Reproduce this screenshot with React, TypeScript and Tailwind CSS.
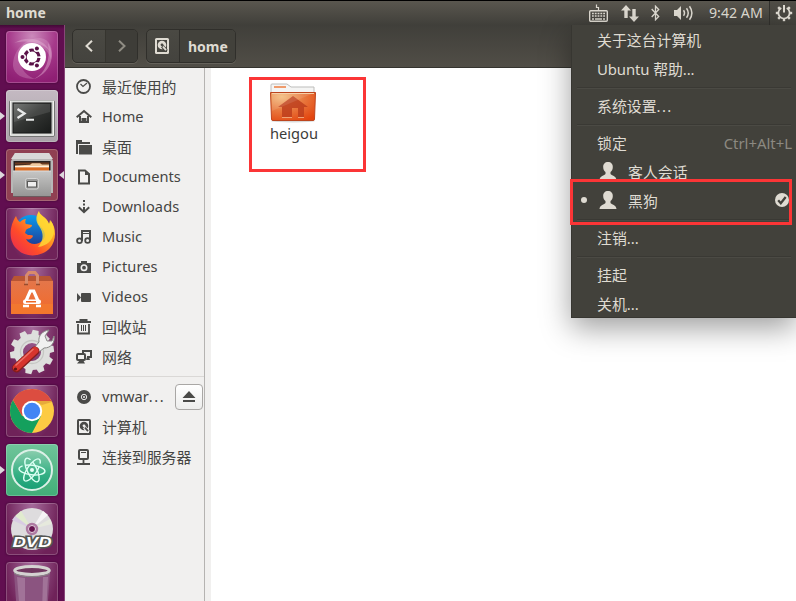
import type { ReactNode } from "react";

const FONT = "font-['Noto_Sans','Noto_Sans_CJK_SC',sans-serif]";

function Svg({ size = 16, children, className = "" }: { size?: number; children: ReactNode; className?: string }) {
  return (
    <svg width={size} height={size} viewBox={`0 0 ${size} ${size}`} className={`shrink-0 ${className}`} fill="none">
      {children}
    </svg>
  );
}

const G = "#4a4a48";

function DiskGlyph({ c, bg }: { c: string; bg: string }) {
  return (
    <>
      <rect x="1" y="0" width="14" height="16" rx="1.5" fill={c} />
      <rect x="3" y="2" width="10" height="12" fill={bg} />
      <circle cx="8" cy="7" r="4.3" fill={c} />
      <circle cx="8" cy="6.8" r="1.4" fill={bg} />
      <path d="M8.3 8.2l4.2 5" stroke={bg} strokeWidth="3.4" />
      <path d="M9 8.6l3 3.6" stroke={c} strokeWidth="1.8" />
    </>
  );
}

/* ---------- Launcher artwork, 52x52 ---------- */

const Dash = () => (
  <>
    <defs>
      <radialGradient id="dash" cx=".5" cy=".1" r=".9">
        <stop offset="0" stopColor="#cb8abb" />
        <stop offset=".5" stopColor="#a63a8b" />
        <stop offset="1" stopColor="#8f1f74" />
      </radialGradient>
    </defs>
    <rect width="52" height="52" rx="3" fill="url(#dash)" />
    <path d="M7 35C7 18 20 7 34 7c10 1 14 11 11 22-3-13-16-19-25-12-6 5-8 13-4 20 3 6 8 9 13 11C17 48 8 44 7 35z" fill="#e5b5d6" opacity=".28" />
    <path d="M42 12c9 14 1 31-14 36 11-6 17-18 14-36z" fill="#edc4df" opacity=".4" />
    <path d="M8 12C20 5 36 6 44 20 34 10 20 9 8 12z" fill="#edc4df" opacity=".35" />
    <circle cx="26" cy="26" r="14" fill="#fff" />
    <circle cx="26" cy="26" r="7" stroke="#5a1148" strokeWidth="3.2" strokeDasharray="12.9 1.76" strokeDashoffset="-.9" />
    <circle cx="17" cy="26" r="3" fill="#fff" />
    <circle cx="30.7" cy="18" r="3" fill="#fff" />
    <circle cx="30.7" cy="34" r="3" fill="#fff" />
    <circle cx="16.5" cy="26" r="2" fill="#5a1148" />
    <circle cx="30.9" cy="17.5" r="2" fill="#5a1148" />
    <circle cx="30.9" cy="34.5" r="2" fill="#5a1148" />
  </>
);

const Terminal = () => (
  <>
    <defs>
      <linearGradient id="term" x2="1" y2="1">
        <stop offset="0" stopColor="#686b68" />
        <stop offset=".45" stopColor="#343634" />
        <stop offset="1" stopColor="#191b1a" />
      </linearGradient>
      <linearGradient id="termTile" x2="0" y2="1">
        <stop offset="0" stopColor="#c4b9c2" />
        <stop offset="1" stopColor="#aaa3a9" />
      </linearGradient>
    </defs>
    <rect width="52" height="52" rx="3" fill="url(#termTile)" />
    <rect x="3.5" y="10.5" width="45" height="36" rx="1.5" fill="#c9cbc8" stroke="#757574" />
    <rect x="4.5" y="11" width="43" height="34" fill="none" stroke="#f2f2ef" />
    <rect x="7" y="13" width="38" height="30" fill="url(#term)" stroke="#191919" />
    <path d="M8 14h36v8L8 32z" fill="#fff" opacity=".1" />
    <path d="M11.5 19l7 4.5-7 4.5" stroke="#e9eaea" strokeWidth="2.3" />
    <path d="M20 29.8h8" stroke="#e9eaea" strokeWidth="2" />
  </>
);

const Files = () => (
  <>
    <defs>
      <linearGradient id="cab" x2="0" y2="1">
        <stop offset="0" stopColor="#c6c6c5" />
        <stop offset="1" stopColor="#969695" />
      </linearGradient>
    </defs>
    <rect width="52" height="52" rx="3" fill="#904052" />
    <path d="M9 4h34l4 8v32H5V12z" fill="#b8b8b7" />
    <path d="M9 4h34l4 6H5z" fill="#d9d9d8" />
    <path d="M7.5 12h37v11h-37z" fill="#292321" />
    <path d="M9 13.5h34v2H9z" fill="#6d3b1f" />
    <path d="M9 16.5l15-.8 2-1.4h8l2 1.2h7v7H9z" fill="#f0cba2" />
    <path d="M9 18.5h34v3.500H9z" fill="#d96c24" />
    <path d="M9 17.5h34" stroke="#fff2de" strokeWidth="1" />
    <path d="M7 22h38v25H7z" fill="url(#cab)" />
    <path d="M7 22h38" stroke="#dededd" />
    <path d="M7 47.500h38" stroke="#6b5b5e" />
    <rect x="19.5" y="29.5" width="13" height="10.5" rx="2" fill="#9b9b9a" stroke="#d5d5d4" />
    <rect x="21.5" y="32.5" width="9" height="5.5" fill="#eee" stroke="#595957" />
  </>
);

const Firefox = () => (
  <>
    <defs>
      <linearGradient id="ff" x1="1" x2="0" y1="0" y2="1">
        <stop offset="0" stopColor="#ffe638" />
        <stop offset=".35" stopColor="#ffa021" />
        <stop offset=".65" stopColor="#ff4c29" />
        <stop offset="1" stopColor="#e52458" />
      </linearGradient>
      <linearGradient id="globe" x2="0" y2="1">
        <stop offset="0" stopColor="#0a9cee" />
        <stop offset="1" stopColor="#20318d" />
      </linearGradient>
    </defs>
    <circle cx="25" cy="24" r="17" fill="url(#globe)" />
    <path d="M10 8c1 3 2 5 4 6 2-2 4-3 6-3-1 2-1 4 0 5l6 1c0 3-4 3-6 5l-1 3 3 2c3 0 5 0 5 1-1 3-4 4-7 3 3 6 12 7 17 1 4-5 1-10-3-14-4-5-3-11-1-15 0 4 8 6 10 13l2-3c6 8 5 20-1 27-8 9-24 10-32 2C1 33 4 17 10 8z" fill="url(#ff)" />
    <path d="M33 3c-4 6-3 11 0 15 5 7 5 14-1 21 9-1 15-7 16-15 0-6-2-10-4-12l-1 4C41 9 33 8 33 3z" fill="#ffdd36" opacity=".8" />
  </>
);

const Software = () => (
  <>
    <defs>
      <linearGradient id="bag" x2="0" y2="1">
        <stop offset="0" stopColor="#e4764a" />
        <stop offset="1" stopColor="#f36a29" />
      </linearGradient>
    </defs>
    <path d="M8 9h36l3 5v33H5V14z" fill="#b85533" />
    <path d="M5 14h42v33H5z" fill="url(#bag)" />
    <path d="M5 37h42v10H5z" fill="#f37e2e" opacity=".6" />
    <path d="M20.500 18V8.500l2.500-3h6l2.500 3V18" stroke="#d98b6b" strokeWidth="3" />
    <path d="M18 17.500h4M30 17.500h4" stroke="#994b2c" strokeWidth="1.5" />
    <path d="M19.500 35l4.800-11h3.400l4.800 11" stroke="#fff" strokeWidth="3.2" />
    <rect x="17" y="32.5" width="18" height="4.500" rx="2" fill="#fff" />
    <path d="M20 34h10v1.500H20z" fill="#ed6826" />
    <path d="M17 39h6M30 39h5" stroke="#fff" strokeWidth="2.4" />
  </>
);

const Settings = () => (
  <>
    <g transform="rotate(11 26 26)">
      {[0, 36, 72, 108, 144, 180, 216, 252, 288, 324].map((a) => (
        <path key={a} d="M21.5 10l1-6h6l1 6z" fill="#dedfdd" transform={`rotate(${a} 26 26)`} />
      ))}
    </g>
    <circle cx="26" cy="26" r="13.5" stroke="#dedfdd" strokeWidth="9" />
    <circle cx="26" cy="26" r="11.5" stroke="#c5c7c3" strokeWidth="1.3" />
    <path d="M28 22l5-6c-1-6 3-11 10-12l-4 6 2 5h5l2-5c1 7-3 12-10 12l-5 4z" fill="#f0f1f0" stroke="#898a88" />
    <path d="M29 25L10.500 42" stroke="#861d1c" strokeWidth="9" strokeLinecap="round" />
    <path d="M29 24.500L10.500 41.500" stroke="#d7342d" strokeWidth="7" strokeLinecap="round" />
    <path d="M27.500 23L9.500 39.500" stroke="#ec7268" strokeWidth="1.5" />
    <circle cx="9.5" cy="43" r="1.600" fill="#5b1515" />
  </>
);

const Chrome = () => (
  <>
    <circle cx="26" cy="26" r="22" fill="#fdcb43" />
    <path d="M6.95 15A22 22 0 0 0 26 48l9-17-18.8 0z" fill="#14a05d" />
    <path d="M6.95 15l9.2 16L26 16h19.5A22 22 0 0 0 6.95 15z" fill="#dc4d40" />
    <path d="M26 16h20v1l-10 3z" fill="#b5622c" opacity=".3" />
    <circle cx="26" cy="26" r="10.2" fill="#fff" />
    <circle cx="26" cy="26" r="8.2" fill="#4285f4" />
  </>
);

const Atom = () => (
  <>
    <defs>
      <linearGradient id="atom" x2="0" y2="1">
        <stop offset="0" stopColor="#8cceae" />
        <stop offset=".6" stopColor="#35b084" />
        <stop offset="1" stopColor="#189e74" />
      </linearGradient>
      <linearGradient id="atomTile" x2="0" y2="1">
        <stop offset="0" stopColor="#6fc49a" />
        <stop offset="1" stopColor="#42ad78" />
      </linearGradient>
    </defs>
    <rect width="52" height="52" rx="3" fill="url(#atomTile)" />
    <circle cx="26" cy="26" r="20" fill="url(#atom)" stroke="#dcf0e7" strokeWidth="2" />
    <g stroke="#dbfff3" strokeWidth="1.4" strokeDasharray="34 3">
      <ellipse cx="26" cy="26" rx="13" ry="4.8" transform="rotate(6 26 26)" />
      <ellipse cx="26" cy="26" rx="13" ry="4.8" transform="rotate(64 26 26)" />
      <ellipse cx="26" cy="26" rx="13" ry="4.8" transform="rotate(124 26 26)" />
    </g>
    <circle cx="26" cy="26" r="2" fill="#e7fff7" />
  </>
);

const Dvd = () => (
  <>
    <circle cx="26" cy="26" r="21" fill="#dedcde" />
    <path d="M26 26L9 13l6-5z" fill="#e1ebcf" />
    <path d="M26 26l18-10 2 5z" fill="#e6e9dd" />
    <path d="M26 26L6 17l3-4z" fill="#d9cce3" />
    <path d="M26 26l11-18 5 4z" fill="#f5f3f5" />
    <circle cx="26" cy="26" r="6.2" fill="#ae7aa2" />
    <circle cx="26" cy="26" r="3.5" fill="#681550" stroke="#e5d5e2" />
    <text x="6.5" y="43.5" textLength="39" lengthAdjust="spacingAndGlyphs" fontFamily="Liberation Sans, sans-serif" fontSize="14" fontWeight="700" fontStyle="italic" fill="#fff" stroke="#555654" strokeWidth="3" paintOrder="stroke">DVD</text>
  </>
);

const Trash = () => (
  <>
    <path d="M8 10l3 42h30l3-42z" fill="#8b5480" />
    <path d="M11 15l3 37h5V16zM37 15l-1 37h4l2-37z" fill="#b58dac" opacity=".55" />
    <ellipse cx="26" cy="8.5" rx="17.3" ry="4" fill="#70375f" stroke="#d4d3d1" strokeWidth="3" />
    <path d="M8 11c6 5 30 5 36 0" stroke="#898987" strokeWidth="1" />
  </>
);

const tiles = [
  { Art: Dash, l: false, r: false },
  { Art: Terminal, l: true, r: false },
  { Art: Files, l: true, r: true },
  { Art: Firefox, l: false, r: false },
  { Art: Software, l: false, r: false },
  { Art: Settings, l: false, r: false },
  { Art: Chrome, l: false, r: false },
  { Art: Atom, l: true, r: false },
  { Art: Dvd, l: false, r: false },
  { Art: Trash, l: false, r: false },
];

function Launcher() {
  return (
    <aside className="flex h-full w-[65px] shrink-0 flex-col gap-[7px] overflow-hidden border-r border-[#884679] bg-[#610e50] bg-linear-to-b from-[#430937] to-[#610e50] to-[4px] pt-[6px]">
      {tiles.map(({ Art, l, r }, i) => (
        <div key={i} className="flex h-[52px] shrink-0 items-center">
          <span className="w-[6px]">
            {l && <svg width="5" height="8" viewBox="0 0 5 8"><path d="M0 0l5 4-5 4z" fill="#ddd7dc" /></svg>}
          </span>
          <div className="h-[52px] w-[52px] overflow-hidden rounded-[3px] bg-[#75306a] bg-radial-[at_50%_0%] from-[#a66c9c] to-[#6f2259] to-75% shadow-[0_0_2px_#380730]">
            <svg width="52" height="52" viewBox="0 0 52 52" fill="none">
              <Art />
              <rect x=".5" y=".5" width="51" height="51" rx="3" stroke="#fff" strokeOpacity=".2" />
            </svg>
          </div>
          <span className="flex w-[6px] justify-end">
            {r && <svg width="5" height="8" viewBox="0 0 5 8"><path d="M5 0L0 4l5 4z" fill="#ddd7dc" /></svg>}
          </span>
        </div>
      ))}
    </aside>
  );
}

/* ---------- File manager places ---------- */

const latin = "pb-[2px]";
const cjk = "text-[14.9px]";

const places: { label: string; icon: ReactNode; w: string }[] = [
  { label: "最近使用的", w: cjk, icon: <><circle cx="7.5" cy="7.5" r="6.5" stroke={G} strokeWidth="1.8" /><path d="M4.5 5L7 7.5l4-3.5" stroke={G} strokeWidth="1.2" /></> },
  { label: "Home", w: latin, icon: <><path d="M.7 8.3L8 2l7.3 6.3" stroke={G} strokeWidth="2" /><path d="M4 7v6h2.5v-3h3v3H12V7" stroke={G} strokeWidth="2" /><path d="M6.7 9h2.6v5H6.7z" fill={G} /></> },
  { label: "桌面", w: cjk, icon: <><path d="M0 1h6v2h8v2H2v10H0z" fill={G} /><path d="M3 6h13v9.500H3z" fill={G} /></> },
  { label: "Documents", w: latin, icon: <><path d="M3 1.500h6L13 5v9.500H3z" stroke={G} strokeWidth="2" /><path d="M9 1v5h4z" fill={G} /></> },
  { label: "Downloads", w: "pb-[2px] tracking-[.1px]", icon: <><path d="M7 1h2v2H7zM7 4.500h2v2H7zM7 8h2v5H7z" fill={G} /><path d="M2.800 8.300L8 13.200l5.200-4.900" stroke={G} strokeWidth="2" /></> },
  { label: "Music", w: latin, icon: <><path d="M6 12V2h8v9" stroke={G} strokeWidth="2" /><path d="M5 4.500h10" stroke={G} strokeWidth="1" /><circle cx="3.500" cy="11.800" r="2.400" stroke={G} strokeWidth="1.800" /><circle cx="11.600" cy="11.500" r="2.400" stroke={G} strokeWidth="1.800" /></> },
  { label: "Pictures", w: "pb-[2px] tracking-[.1px]", icon: <><path d="M1 4h4V2h6v2h4v10H1z" fill={G} /><circle cx="8" cy="8.700" r="2.700" stroke="#f1f0ef" strokeWidth="1.600" /></> },
  { label: "Videos", w: "pb-[2px] tracking-[.1px]", icon: <><rect x="5" y="4" width="10" height="9" rx="1" fill={G} /><path d="M1 4l4 4.500L1 13z" fill={G} /></> },
  { label: "回收站", w: cjk, icon: <><path d="M0 3h15M3.500 1h8M2 5v9.500h11V5" stroke={G} strokeWidth="1.800" /><path d="M5.500 6v6M7.500 6v6M9.500 6v6" stroke={G} strokeWidth="1" /></> },
  { label: "网络", w: cjk, icon: <><path d="M7 4V2h8v6h-4" stroke={G} strokeWidth="2" /><rect x="1" y="5" width="8" height="6" rx="1" stroke={G} strokeWidth="2" /><path d="M4 11h3l2 3.500H1zM11 8h2l1 3h-4z" fill={G} /></> },
];

const row = "flex h-[30px] shrink-0 items-center gap-[10px] pl-[11px] text-[14.6px] leading-[28px] text-[#454543] whitespace-nowrap";

function Sidebar() {
  return (
    <nav className="flex w-[140px] shrink-0 flex-col border-r border-[#b5b3b1] bg-[#f1f0ef] pt-[4px]">
      {places.map((p) => (
        <div key={p.label} className={row}>
          <Svg>{p.icon}</Svg>
          <span className={p.w}>{p.label}</span>
        </div>
      ))}
      <div className="mt-[4px] mb-[5px] h-[1px] shrink-0 bg-[#dad8d6]" />
      <div className={row}>
        <Svg><circle cx="8" cy="8" r="7" fill={G} /><circle cx="8" cy="8" r="2.7" stroke="#e9e8e7" /><circle cx="8" cy="8" r="1" fill="#e9e8e7" /></Svg>
        <span className="w-[63px] pb-[2px]">vmwar<span className="tracking-[1.6px]">...</span></span>
        <span className="flex h-[26px] w-[28px] items-center justify-center rounded-[4px] border border-[#a9a7a5] bg-linear-to-b from-white to-[#ededec]">
          <svg width="14" height="12" viewBox="0 0 14 12"><path d="M7 0l6.5 7H.5zM1 9h12v2H1z" fill={G} /></svg>
        </span>
      </div>
      <div className={row}><Svg><DiskGlyph c={G} bg="#f1f0ef" /></Svg><span className={cjk}>计算机</span></div>
      <div className={row}>
        <Svg><rect x="3" y="1" width="9" height="9" rx="1" stroke={G} strokeWidth="2" /><path d="M5 3.5h5" stroke={G} /><path d="M7.5 10v5M1 15h13" stroke={G} strokeWidth="1.8" /></Svg>
        <span className={cjk}>连接到服务器</span>
      </div>
    </nav>
  );
}

/* ---------- Session menu ---------- */

const Person = () => (
  <svg width="18" height="18" viewBox="0 0 18 18"><path d="M9 0c3 0 5 2 4.800 5.200C13.700 7.700 12.700 9 11.500 10v2c1 1.400 5.800 2 6 6H.5c.2-4 5-4.600 6-6v-2C5.300 9 4.300 7.700 4.200 5.200 4 2 6 0 9 0z" fill="#dfdbd2" /></svg>
);

const Sep = () => <div className="mx-[5px] mt-[4px] mb-[2px] h-[2px] shrink-0 border-t border-b border-t-[#3a3934] border-b-[#4b4a44]" />;

const item = "flex h-[29px] shrink-0 items-center whitespace-nowrap pt-[2px] pl-[25px]";

function SessionMenu() {
  return (
    <div className="absolute top-[25px] left-[571px] flex h-[293px] w-[225px] flex-col border border-t-0 border-r-0 border-[#373631] bg-[#42413b] text-[14.9px] text-[#dfdbd2] shadow-[0_10px_28px_rgba(0,0,0,0.38)]">
      <div className={item}>关于这台计算机</div>
      <div className={item}><span className="tracking-[-.1px]">Ubuntu 帮助...</span></div>
      <Sep />
      <div className={item}>系统设置<span className="tracking-[1.400px]">...</span></div>
      <Sep />
      <div className={`${item} justify-between pr-[4px]`}><span>锁定</span><span className="text-[#8c8981]">Ctrl+Alt+L</span></div>
      <div className={item}><span className="mr-[11px] mb-[3px] ml-[2px]"><Person /></span>客人会话</div>
      <div className="relative flex h-[29px] shrink-0 items-center pl-[9px]">
        <span className="mr-[12px] mb-[1px] h-[6px] w-[6px] rounded-full bg-[#dfdbd2]" />
        <span className="mb-[1px]"><Person /></span>
        <span className="ml-[11px] pt-[2px]">黑狗</span>
        <svg className="mr-[7px] mb-[1px] ml-auto" width="14" height="14" viewBox="0 0 14 14"><circle cx="7" cy="7" r="7" fill="#dfdbd2" /><path d="M3.2 7.3l2.6 2.9L10.7 4" stroke="#42413b" strokeWidth="2.3" fill="none" /></svg>
        <div className="absolute top-[-7px] left-[-2px] h-[46px] w-[222px] border-[3px] border-[#fb3536]" />
      </div>
      <Sep />
      <div className={item}>注销...</div>
      <Sep />
      <div className={item}>挂起</div>
      <div className={item}>关机...</div>
    </div>
  );
}

function TopBar() {
  const C = "#dfdbd2";
  return (
    <header className="flex h-[25px] shrink-0 items-center border-t border-black bg-linear-to-b from-[#5a574f] to-[#403f3a] text-[#dfdbd2]">
      <span className="w-[589px] pl-[6px] text-[14px] leading-[20px] font-bold">home</span>
      <svg className="mb-[1px]" width="19" height="19" viewBox="0 0 19 19" fill="none">
        <rect x=".7" y="7.7" width="17.6" height="10.6" rx="1" stroke={C} strokeWidth="1.4" />
        <path d="M9.5 7V4.500h-2V1.500" stroke={C} strokeWidth="1.2" />
        <path d="M3 10.500h13M3 13h13" stroke={C} strokeWidth="1.7" strokeDasharray="1.8 1" />
        <path d="M3 16h2M6 16h7M14 16h2" stroke={C} strokeWidth="1.6" />
      </svg>
      <svg className="ml-[13px]" width="18" height="17" viewBox="0 0 18 17"><path d="M5 0l5 5.500H6.700V13H3.300V5.500H0zM13 17l-5-5.500h3.300V4h3.400v7.500H18z" fill={C} /></svg>
      <svg className="ml-[12px]" width="9" height="16" viewBox="0 0 9 16" fill="none"><path d="M.7 4l7 7.500-3.200 3.300V1.200l3.200 3.300-7 7.500" stroke={C} strokeWidth="1.3" /></svg>
      <svg className="ml-[13px]" width="21" height="16" viewBox="0 0 21 16" fill="none">
        <path d="M1 5h3l4-4v14l-4-4H1z" fill={C} />
        <path d="M10.500 5.200q2 2.800 0 5.600M13.500 3.200q3.500 4.800 0 9.600M16.500 1.200q4.800 6.800 0 13.600" stroke={C} strokeWidth="1.5" />
      </svg>
      <span className="ml-[15px] w-[60px] text-[14.2px] whitespace-nowrap">9:42 AM</span>
      <span className="flex h-[24px] w-[27px] items-center justify-center border-l border-[#32312d] bg-linear-to-b from-[#514e47] to-[#42413b] pl-[2px]">
        <svg width="18" height="18" viewBox="0 0 18 18" fill="none">
          {[45, 90, 135, 180, 225, 270, 315].map((a) => <path key={a} d="M9 .8v3" stroke={C} strokeWidth="2.4" transform={`rotate(${a} 9 9)`} />)}
          <path d="M6.300 4A5.600 5.600 0 1 0 11.700 4" stroke={C} strokeWidth="1.700" />
          <path d="M9 1v7.500" stroke={C} strokeWidth="2" />
        </svg>
      </span>
    </header>
  );
}

const btnGroup = "flex h-[34px] items-stretch overflow-hidden rounded-[5px] border border-[#302f2b] bg-linear-to-b from-[#4a4943] to-[#44433e] shadow-[0_1px_0_#64615a]";

function Toolbar() {
  return (
    <div className="flex h-[43px] shrink-0 items-center border-b border-[#35342f] bg-linear-to-b from-[#403f3a] to-[#514e47] pl-[7px]">
      <div className={`${btnGroup} w-[66px]`}>
        <span className="flex w-[32px] items-center justify-center"><svg width="8" height="12" viewBox="0 0 8 12" fill="none"><path d="M7 .8L1.500 6 7 11.200" stroke="#dfdbd2" strokeWidth="2" /></svg></span>
        <span className="flex flex-1 items-center justify-center border-l border-[#36352f] bg-[#3e3d38]"><svg width="8" height="12" viewBox="0 0 8 12" fill="none"><path d="M1 .8L6.500 6 1 11.200" stroke="#8f8c83" strokeWidth="2" /></svg></span>
      </div>
      <div className={`${btnGroup} ml-[8px] w-[90px]`}>
        <span className="flex w-[32px] items-center justify-center pr-[2px]"><Svg><DiskGlyph c="#dfdbd2" bg="#474640" /></Svg></span>
        <span className="flex flex-1 items-center border-l border-[#302f2b] bg-[#42413b] pl-[8px] text-[14px] font-bold text-[#dfdbd2]">home</span>
      </div>
    </div>
  );
}

const HomeFolder = () => (
  <svg width="48" height="40" viewBox="0 0 48 40" fill="none">
    <defs>
      <radialGradient id="folder" cx=".25" cy=".15" r="1">
        <stop offset="0" stopColor="#f3bc7e" />
        <stop offset=".5" stopColor="#e8783e" />
        <stop offset="1" stopColor="#e3440e" />
      </radialGradient>
    </defs>
    <ellipse cx="24" cy="38" rx="22" ry="1.5" fill="#000" opacity=".15" />
    <path d="M2 10V2q0-1 1-1h15l4 3h23v7z" fill="#f5f5f4" stroke="#bdbdbb" />
    <path d="M5 3h12v2H5z" fill="#ef9b6c" />
    <path d="M1.500 9.500h45L45.500 36q0 1.500-1.500 1.500H4q-1.500 0-1.500-1.500z" fill="url(#folder)" stroke="#bd451e" />
    <path d="M3 10.500h42" stroke="#f6ca9d" />
    <path d="M24 13L9 24h4v10.500h10V25h6v9.500h6V24h4z" fill="#bd3e1d" opacity=".85" />
    <path d="M13 34.500h10M29 34.500h6" stroke="#f0a275" />
    <path d="M3 10h42L3 28z" fill="#fff" opacity=".1" />
  </svg>
);

export default function App() {
  return (
    <div className={`relative flex h-[601px] w-[796px] flex-col overflow-hidden bg-white ${FONT}`}>
      <TopBar />
      <div className="flex h-[576px]">
        <Launcher />
        <section className="flex min-w-0 flex-1 flex-col">
          <Toolbar />
          <div className="flex min-h-0 flex-1">
            <Sidebar />
            <main className="flex flex-1 items-start border-l-[6px] border-[#f1f0ef] bg-white pt-[9px] pl-[38px]">
              <div className="flex h-[95px] w-[117px] flex-col border-[3px] border-[#fb3536] pt-[3px] pl-[17px]">
                <HomeFolder />
                <span className="pl-[1px] text-[14.67px] leading-[20px] text-[#3c3c3a]">heigou</span>
              </div>
            </main>
          </div>
        </section>
      </div>
      <SessionMenu />
    </div>
  );
}
